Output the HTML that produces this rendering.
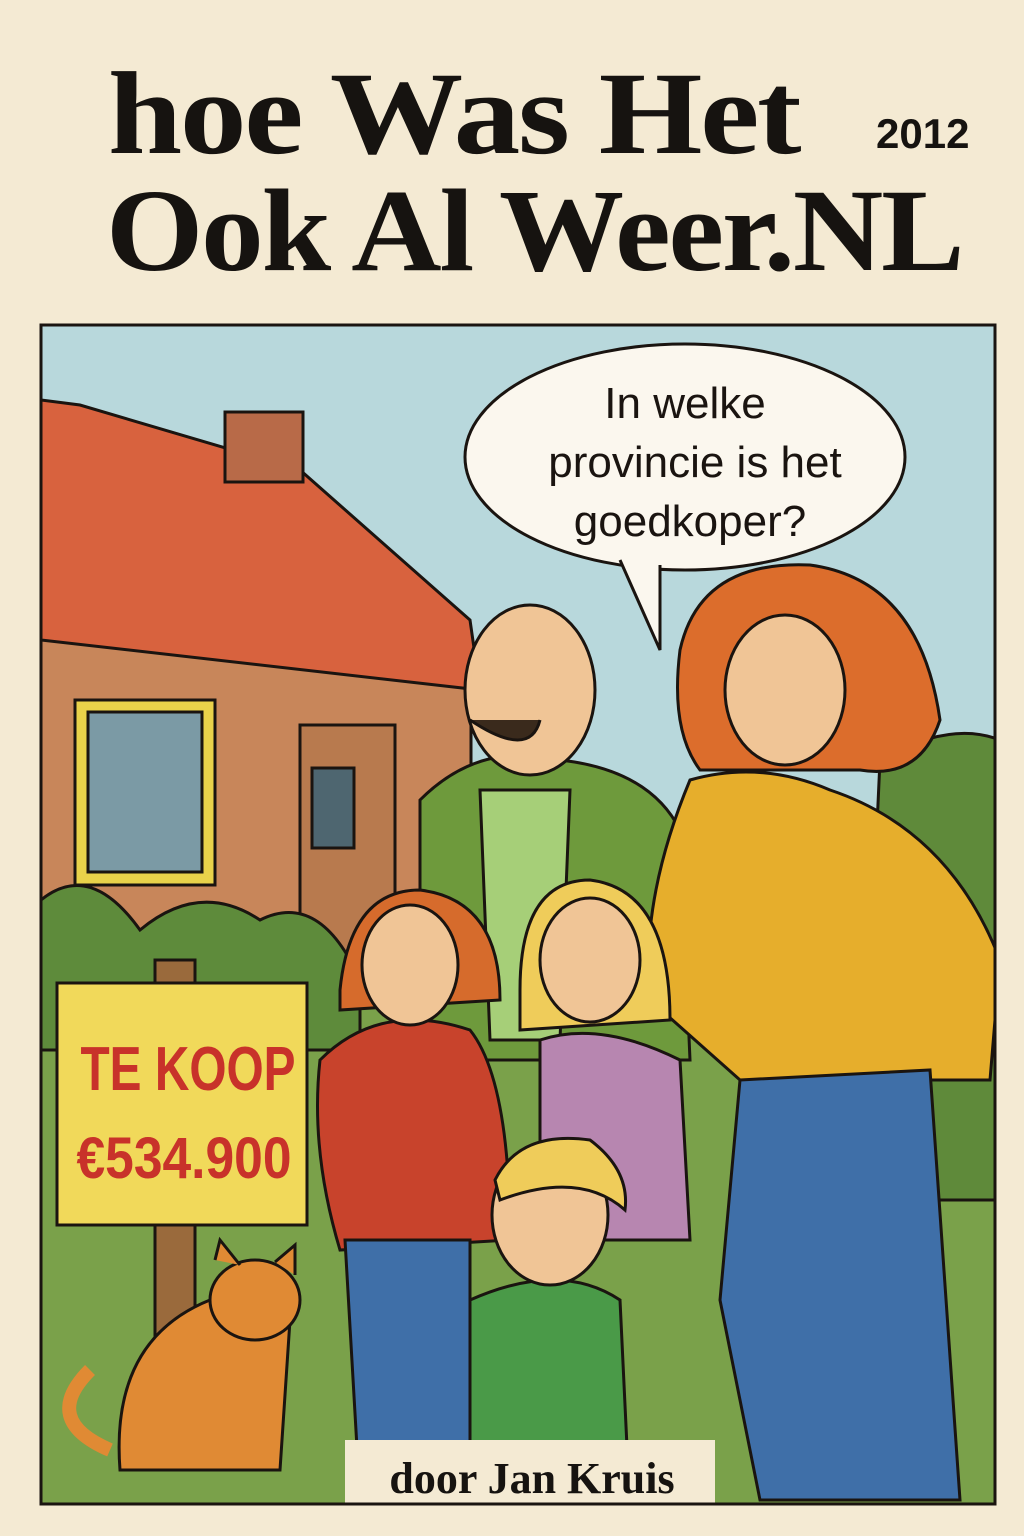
<!DOCTYPE html>
<html><head><meta charset="utf-8"><style>
html,body{margin:0;padding:0;background:#f4ead3;}
body{width:1024px;height:1536px;position:relative;overflow:hidden;font-family:"Liberation Serif",serif;}
.t{position:absolute;font-weight:bold;color:#161310;font-size:118px;letter-spacing:-2px;line-height:1;transform-origin:0 0;white-space:nowrap;}
</style></head><body>
<div class="t" style="top:55px;left:108px;transform:scaleX(1.13);">hoe Was Het</div>
<div class="t" style="top:172px;left:106px;transform:scaleX(1.06);">Ook Al Weer.NL</div>
<div style="position:absolute;left:876px;top:110px;font:bold 42px 'Liberation Sans',sans-serif;color:#161310;">2012</div>
<svg style="position:absolute;left:0;top:0" width="1024" height="1536" viewBox="0 0 1024 1536">
<defs><clipPath id="c"><rect x="41" y="325" width="954" height="1179"/></clipPath></defs>
<g clip-path="url(#c)" stroke="#1a1410" stroke-width="3">
<rect x="41" y="325" width="954" height="1179" fill="#b8d8dc" stroke="none"/>
<path d="M41 1000 L1000 960 L1000 1510 L41 1510Z" fill="#7aa14a" stroke="none"/>
<path d="M880 760 Q950 720 1000 740 L1000 1200 L860 1200Z" fill="#5f8a3a"/>
<rect x="41" y="640" width="430" height="340" fill="#c8865a"/>
<path d="M41 400 L80 405 L300 470 L470 620 L480 690 L41 640Z" fill="#d8623e"/>
<rect x="225" y="412" width="78" height="70" fill="#b86a48"/>
<rect x="75" y="700" width="140" height="185" fill="#e9d24a"/>
<rect x="88" y="712" width="114" height="160" fill="#7b9aa5"/>
<rect x="300" y="725" width="95" height="255" fill="#b87a4e"/>
<rect x="312" y="768" width="42" height="80" fill="#4e6670"/>
<path d="M41 900 Q90 860 140 930 Q200 880 260 920 Q320 890 360 980 L360 1050 L41 1050Z" fill="#5e8b3b"/>
<ellipse cx="685" cy="457" rx="220" ry="113" fill="#fbf7ee"/>
<path d="M620 560 L660 650 L660 565" fill="#fbf7ee"/>
<path d="M420 800 Q480 740 560 760 Q650 770 680 830 L690 1060 L420 1060Z" fill="#6e9a3c"/>
<path d="M480 790 L570 790 L560 1040 L490 1040Z" fill="#a6cf78"/>
<ellipse cx="530" cy="690" rx="65" ry="85" fill="#f0c596"/>
<path d="M470 720 Q530 760 540 720" fill="#3a2a1c"/>
<path d="M690 780 Q760 760 830 790 Q950 830 1000 960 L990 1080 L740 1080 L650 1000 Q640 900 690 780Z" fill="#e6ae2c"/>
<path d="M740 1080 L930 1070 L960 1500 L760 1500 L720 1300Z" fill="#3f6fa8"/>
<path d="M680 650 Q700 560 810 565 Q920 580 940 720 Q920 780 860 770 L700 770 Q670 730 680 650Z" fill="#dc6d2c"/>
<ellipse cx="785" cy="690" rx="60" ry="75" fill="#f0c596"/>
<path d="M320 1060 Q380 1000 470 1030 Q510 1080 510 1240 L340 1250 Q310 1150 320 1060Z" fill="#c8432c"/>
<path d="M345 1240 L470 1240 L470 1500 L360 1500Z" fill="#3f6fa8"/>
<path d="M340 990 Q350 890 420 890 Q500 900 500 1000 L340 1010Z" fill="#d66b2c"/>
<ellipse cx="410" cy="965" rx="48" ry="60" fill="#f0c596"/>
<path d="M540 1040 Q600 1020 680 1060 L690 1240 L540 1240Z" fill="#b786b0"/>
<path d="M520 990 Q520 880 590 880 Q670 890 670 1020 L520 1030Z" fill="#efcc5a"/>
<ellipse cx="590" cy="960" rx="50" ry="62" fill="#f0c596"/>
<path d="M470 1300 Q560 1260 620 1300 L630 1510 L470 1510Z" fill="#4a9a48"/>
<ellipse cx="550" cy="1215" rx="58" ry="70" fill="#f0c596"/>
<path d="M495 1180 Q520 1130 590 1140 Q630 1170 625 1210 Q580 1170 500 1200Z" fill="#efcc5a"/>
<rect x="155" y="960" width="40" height="400" fill="#9a6a3c"/>
<rect x="57" y="983" width="250" height="242" fill="#f1d95a"/>
<path d="M120 1470 Q110 1340 210 1300 Q270 1290 290 1320 L280 1470Z" fill="#e08a34"/>
<path d="M110 1450 Q40 1420 90 1370" fill="none" stroke-width="14" stroke="#e08a34"/>
<ellipse cx="255" cy="1300" rx="45" ry="40" fill="#e08a34"/>
<path d="M215 1260 L220 1240 L240 1265 M275 1262 L295 1245 L295 1275" fill="#e08a34"/>
<rect x="345" y="1440" width="370" height="70" fill="#f4ead3" stroke="none"/>
</g>
<rect x="41" y="325" width="954" height="1179" fill="none" stroke="#1a1410" stroke-width="3"/>
<text x="685" y="418" text-anchor="middle" font-family="Liberation Sans,sans-serif" font-size="44" fill="#1a1410">In welke</text>
<text x="695" y="477" text-anchor="middle" font-family="Liberation Sans,sans-serif" font-size="44" fill="#1a1410">provincie is het</text>
<text x="690" y="536" text-anchor="middle" font-family="Liberation Sans,sans-serif" font-size="44" fill="#1a1410">goedkoper?</text>
<text x="188" y="1090" text-anchor="middle" font-family="Liberation Sans,sans-serif" font-weight="bold" font-size="62" fill="#c8322a" textLength="215" lengthAdjust="spacingAndGlyphs">TE KOOP</text>
<text x="184" y="1178" text-anchor="middle" font-family="Liberation Sans,sans-serif" font-weight="bold" font-size="58" fill="#c8322a" textLength="215" lengthAdjust="spacingAndGlyphs">€534.900</text>
<text x="532" y="1493" text-anchor="middle" font-family="Liberation Serif,serif" font-weight="bold" font-size="44" fill="#161310">door Jan Kruis</text>
</svg>
</body></html>
